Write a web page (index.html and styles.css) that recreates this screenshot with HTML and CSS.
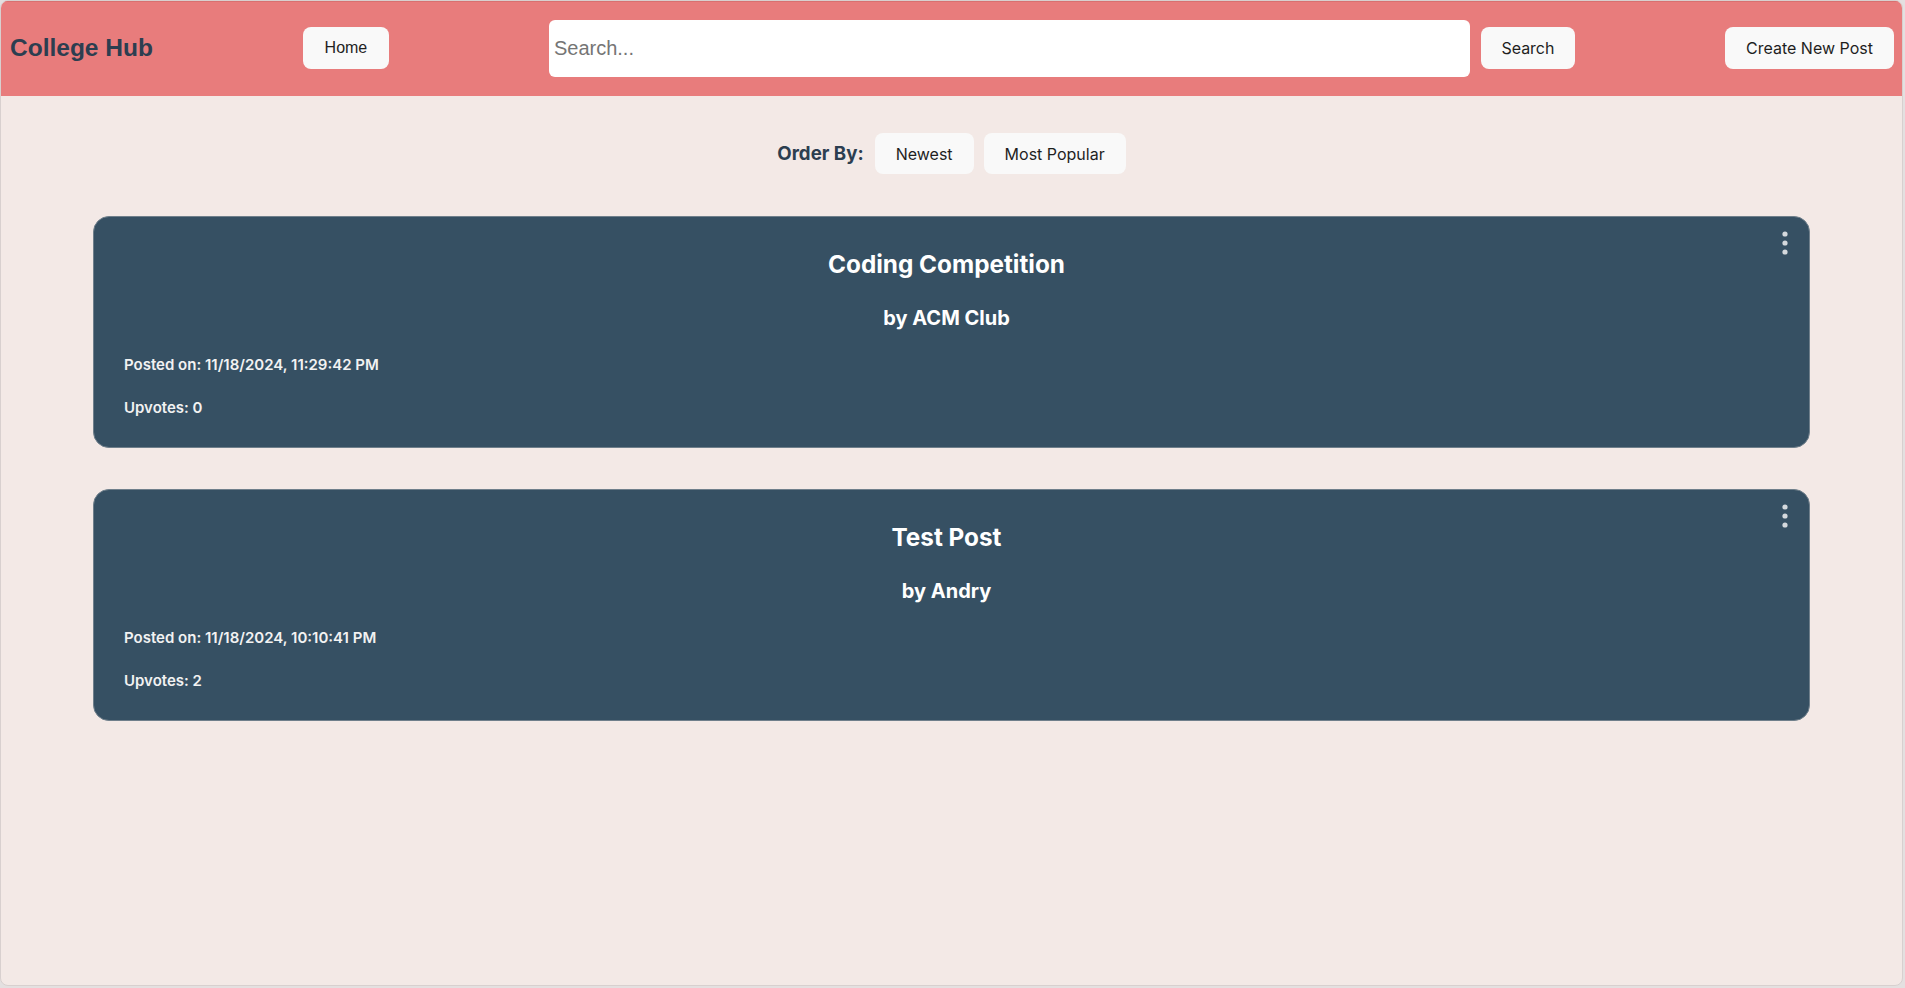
FILE: index.html
```html
<!DOCTYPE html>
<html lang="en">
<head>
<meta charset="utf-8">
<title>College Hub</title>
<link rel="stylesheet" href="styles.css">
</head>
<body>
<div class="app">
  <header class="topbar">
    <h1 class="logo">College Hub</h1>
    <button class="btn btn-home">Home</button>
    <div class="search">
      <input class="search-input" type="text" placeholder="Search...">
      <button class="btn">Search</button>
    </div>
    <button class="btn btn-create">Create New Post</button>
  </header>
  <main class="content">
    <div class="order">
      <span class="order-label">Order By:</span>
      <button class="btn">Newest</button>
      <button class="btn">Most Popular</button>
    </div>
    <div class="posts">
      <article class="card">
        <span class="kebab"><svg width="8" height="24" viewBox="0 0 8 24"><circle cx="4" cy="3" r="2.6"/><circle cx="4" cy="12" r="2.6"/><circle cx="4" cy="21" r="2.6"/></svg></span>
        <h2 class="card-title">Coding Competition</h2>
        <h3 class="card-author">by ACM Club</h3>
        <p class="card-meta">Posted on: 11/18/2024, 11:29:42 PM</p>
        <p class="card-meta card-votes">Upvotes: 0</p>
      </article>
      <article class="card">
        <span class="kebab"><svg width="8" height="24" viewBox="0 0 8 24"><circle cx="4" cy="3" r="2.6"/><circle cx="4" cy="12" r="2.6"/><circle cx="4" cy="21" r="2.6"/></svg></span>
        <h2 class="card-title">Test Post</h2>
        <h3 class="card-author">by Andry</h3>
        <p class="card-meta">Posted on: 11/18/2024, 10:10:41 PM</p>
        <p class="card-meta card-votes">Upvotes: 2</p>
      </article>
    </div>
  </main>
</div>
</body>
</html>
```
FILE: styles.css
```css
html, body {
  margin: 0;
  padding: 0;
  background: #e4e0e0;
}
body {
  font-family: "Inter", "Liberation Sans", sans-serif;
}
.app {
  width: 1901px;
  height: 984px;
  border: 1px solid #d8d0cf;
  border-radius: 8px;
  overflow: hidden;
  background: #f3e9e6;
}
.topbar {
  box-sizing: border-box;
  height: 95px;
  padding-bottom: 2px;
  background: #e87c7c;
  border-top: 1px solid #d97070;
  display: flex;
  align-items: center;
}
.logo {
  margin: 0 0 0 9px;
  font-family: "Liberation Sans", Arial, sans-serif;
  font-size: 24.5px;
  font-weight: 700;
  color: #2c3e50;
}
.btn {
  height: 42px;
  padding: 0 21px;
  border: none;
  border-radius: 8px;
  background: #f9f9f9;
  font-family: "Inter", sans-serif;
  font-size: 16px;
  color: #1f1f1f;
  cursor: pointer;
}
.btn-home {
  margin-left: 150px;
  width: 86px;
  padding: 0;
  font-family: "Liberation Sans", Arial, sans-serif;
  font-size: 16px;
}
.search {
  margin-left: 160px;
  display: flex;
  align-items: center;
  gap: 11px;
}
.search .btn {
  width: 94px;
  padding: 0;
}
.search-input {
  width: 921px;
  height: 57px;
  box-sizing: border-box;
  border: none;
  border-radius: 6px;
  background: #fff;
  padding: 0 5px;
  font-family: "Liberation Sans", Arial, sans-serif;
  font-size: 20px;
  color: #333;
  outline: none;
}
.search-input::placeholder {
  color: #757575;
}
.btn-create {
  margin-left: auto;
  margin-right: 8px;
  width: 169px;
  padding: 0;
}
.content {
  padding: 37px 92px 0;
}
.order {
  display: flex;
  justify-content: center;
  align-items: center;
  gap: 10px;
}
.order .btn {
  height: 41px;
}
.order-label {
  font-size: 18.7px;
  font-weight: 700;
  color: #2c3e50;
  margin-right: 1px;
}
.posts {
  margin-top: 42px;
  display: flex;
  flex-direction: column;
  gap: 41px;
}
.card {
  position: relative;
  background: #365063;
  border: 1px solid #6f7f8b;
  border-radius: 16px;
  padding: 33px 40px 31px 30px;
  color: #fff;
}
.kebab {
  position: absolute;
  top: 14px;
  right: 20px;
  line-height: 0;
}
.kebab svg {
  fill: #d5d9dd;
}
.card-title {
  margin: 0 0 28px;
  text-align: center;
  font-size: 24.3px;
  line-height: 29px;
  font-weight: 700;
}
.card-author {
  margin: 0 0 26px;
  text-align: center;
  font-size: 20px;
  line-height: 23px;
  font-weight: 700;
}
.card-meta {
  margin: 0 0 26px;
  font-size: 15px;
  line-height: 17px;
  font-weight: 600;
  color: #f2f2f2;
}
.card-votes {
  margin-bottom: 0;
}
```
